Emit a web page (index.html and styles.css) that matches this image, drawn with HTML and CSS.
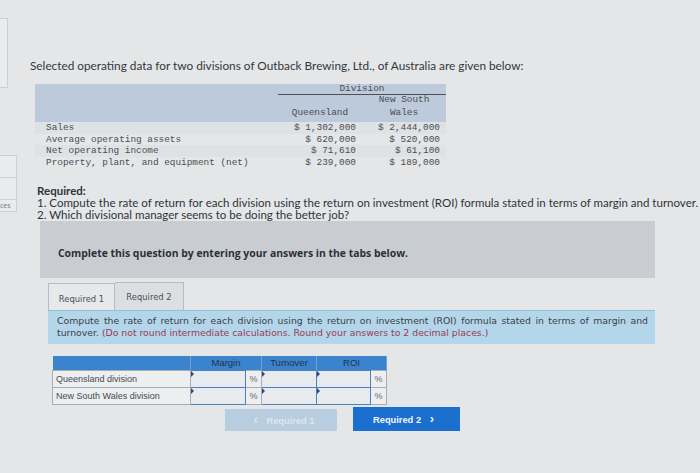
FILE: index.html
```html
<!DOCTYPE html>
<html>
<head>
<meta charset="utf-8">
<link rel="stylesheet" href="styles.css">
</head>
<body>
<div class="page">
  <aside class="sidebar">
    <div class="side-box side-box-a"></div>
    <div class="side-box side-box-b">
      <div class="side-cell"></div>
      <div class="side-cell"></div>
      <div class="side-cell side-label">ces</div>
    </div>
  </aside>
  <main class="main">
    <p class="intro">Selected operating data for two divisions of Outback Brewing, Ltd., of Australia are given below:</p>

    <table class="data">
      <tbody>
        <tr class="band">
          <td class="lbl"></td>
          <td class="div-head" colspan="2">Division</td>
        </tr>
        <tr class="band">
          <td class="lbl"></td>
          <td class="num"></td>
          <td class="num ctr">New South</td>
        </tr>
        <tr class="band band-last">
          <td class="lbl"></td>
          <td class="num ctr">Queensland</td>
          <td class="num ctr">Wales</td>
        </tr>
        <tr class="row">
          <td class="lbl">Sales</td>
          <td class="num">$ 1,302,000</td>
          <td class="num">$ 2,444,000</td>
        </tr>
        <tr class="row">
          <td class="lbl">Average operating assets</td>
          <td class="num">$ 620,000</td>
          <td class="num">$ 520,000</td>
        </tr>
        <tr class="row">
          <td class="lbl">Net operating income</td>
          <td class="num">$ 71,610</td>
          <td class="num">$ 61,100</td>
        </tr>
        <tr class="row">
          <td class="lbl">Property, plant, and equipment (net)</td>
          <td class="num">$ 239,000</td>
          <td class="num">$ 189,000</td>
        </tr>
      </tbody>
    </table>

    <div class="required">
      <div class="req-title">Required:</div>
      <div>1. Compute the rate of return for each division using the return on investment (ROI) formula stated in terms of margin and turnover.</div>
      <div>2. Which divisional manager seems to be doing the better job?</div>
    </div>

    <div class="notice">Complete this question by entering your answers in the tabs below.</div>

    <div class="tabs">
      <div class="tab tab-active">Required 1</div>
      <div class="tab tab-other">Required 2</div>
    </div>
    <div class="instructions">
      <div class="line line-just">Compute the rate of return for each division using the return on investment (ROI) formula stated in terms of margin and</div>
      <div class="line">turnover. <span class="hint">(Do not round intermediate calculations. Round your answers to 2 decimal places.)</span></div>
    </div>

    <table class="answer">
      <thead>
        <tr>
          <th class="a-lbl"></th>
          <th colspan="2">Margin</th>
          <th>Turnover</th>
          <th colspan="2">ROI</th>
        </tr>
      </thead>
      <tbody>
        <tr>
          <td class="a-lbl">Queensland division</td>
          <td class="inp"><span class="mark"></span></td>
          <td class="pct">%</td>
          <td class="inp"><span class="mark"></span></td>
          <td class="inp"><span class="mark"></span></td>
          <td class="pct">%</td>
        </tr>
        <tr>
          <td class="a-lbl">New South Wales division</td>
          <td class="inp"><span class="mark"></span></td>
          <td class="pct">%</td>
          <td class="inp"><span class="mark"></span></td>
          <td class="inp"><span class="mark"></span></td>
          <td class="pct">%</td>
        </tr>
      </tbody>
    </table>

    <div class="nav">
      <div class="btn btn-prev"><span class="chev">&lsaquo;</span> Required 1</div>
      <div class="btn btn-next">Required 2 <span class="chev">&rsaquo;</span></div>
    </div>
  </main>
</div>
</body>
</html>
```

FILE: styles.css
```css
* { box-sizing: border-box; }
html, body { margin: 0; padding: 0; }
body {
  background: #e4e6e8;
  width: 700px;
  height: 473px;
  overflow: hidden;
  font-family: "Lato", "Open Sans", sans-serif;
  color: #2d3236;
}
.page {
  display: flex;
  height: 473px;
}
.sidebar {
  width: 18px;
  flex: none;
  padding-top: 18px;
  display: flex;
  flex-direction: column;
}
.side-box {
  border: 1px solid #cdd0d3;
  border-left: none;
  background: #e9ebed;
}
.side-box-a {
  width: 8px;
  height: 70px;
}
.side-box-b {
  width: 17px;
  margin-top: 67px;
  display: flex;
  flex-direction: column;
}
.side-cell {
  height: 22px;
  border-bottom: 1px solid #cdd0d3;
}
.side-cell:last-child { border-bottom: none; height: 11px; }
.side-label {
  font-family: "Open Sans", sans-serif;
  font-size: 7px;
  line-height: 11px;
  color: #6d7a86;
}
.main {
  flex: 1;
  padding-left: 12px;
}
.intro {
  margin: 58px 0 0 0;
  font-size: 11.8px;
  line-height: 16px;
  color: #33383c;
  white-space: nowrap;
}
.data {
  margin: 10px 0 0 5px;
  border-collapse: collapse;
  font-family: "Liberation Mono", monospace;
  font-size: 9.4px;
  color: #4a4e52;
}
.data td {
  padding: 0;
  height: 10px;
  line-height: 10px;
  white-space: nowrap;
}
.data .lbl { width: 243px; padding-left: 11px; }
.data .num { width: 84px; text-align: right; padding-right: 6px; }
.data .ctr { text-align: center; padding-right: 0; }
.band td { background: #bccadb; }
.band-last td { height: 17px; vertical-align: middle; padding-bottom: 2px; }
.data .div-head {
  text-align: center;
  border-bottom: 1px solid #4d5258;
  height: 10px;
  vertical-align: bottom;
}
.row td { height: 11.5px; padding-top: 1px; }
.row:nth-child(even) td { background: #dfe2e5; }
.required {
  margin: 17px 0 0 7px;
  font-size: 11.5px;
  line-height: 12px;
  color: #2f3438;
  white-space: nowrap;
}
.req-title { font-weight: 700; }
.notice {
  margin: 0 0 0 10px;
  width: 615px;
  height: 57px;
  background: #c9cdd1;
  padding: 25px 0 0 18px;
  font-family: "Open Sans", sans-serif;
  font-weight: 700;
  font-size: 10.4px;
  color: #2d3135;
  white-space: nowrap;
}
.tabs {
  display: flex;
  margin: 4px 0 0 18px;
}
.tab {
  height: 28px;
  padding-top: 10px;
  text-align: center;
  white-space: nowrap;
  font-family: "DejaVu Sans", sans-serif;
  font-size: 8.4px;
  color: #4b5055;
  border: 1px solid #b8bcc0;
  border-bottom: none;
  background: #dcdfe2;
}
.tab-active {
  background: #e6e8ea;
  width: 67px;
  margin-top: 1px;
  height: 27px;
  padding-top: 10px;
}
.tab-other { width: 69px; border-left: none; padding-top: 9px; }
.instructions {
  margin-left: 18px;
  width: 607px;
  height: 34px;
  background: #b3d6ea;
  border-top: 1px solid #8fbfd9;
  padding: 4px 7px 0 9px;
  font-family: "DejaVu Sans", sans-serif;
  font-size: 9.3px;
  line-height: 12px;
  color: #3a4046;
}
.line { white-space: nowrap; }
.line-just {
  white-space: normal;
  text-align: justify;
  text-align-last: justify;
}
.hint { color: #9a3a55; }
.answer {
  margin: 12px 0 0 22px;
  border-collapse: collapse;
  font-family: "Liberation Sans", sans-serif;
  font-size: 9px;
}
.answer th {
  background: #3b83cc;
  color: #1e3550;
  font-weight: 400;
  font-size: 9.5px;
  height: 14px;
  padding: 0;
  border-right: 1px solid #6fa0d6;
  text-align: center;
}
.answer th.a-lbl { width: 138px; }
.answer td {
  padding: 0;
  height: 17px;
  border: 1px solid #a9adb1;
  background: #eceef0;
}
.answer td.a-lbl {
  padding-left: 3px;
  color: #444a50;
}
.answer td.inp {
  width: 55px;
  border: 1.5px solid #4d7fbc;
  background: #e8ebee;
  position: relative;
}
.answer tr td.inp + td.inp { width: 54px; }
.answer td.pct {
  width: 16px;
  text-align: center;
  color: #666b70;
}
.mark {
  position: absolute;
  left: 0;
  top: 0;
  width: 0;
  height: 0;
  border-top: 3px solid transparent;
  border-bottom: 3px solid transparent;
  border-left: 3px solid #2a4a77;
}
.nav {
  display: flex;
  margin: 2px 0 0 195px;
  gap: 16px;
}
.btn {
  height: 24px;
  font-family: "Liberation Sans", sans-serif;
  font-weight: 700;
  font-size: 9.3px;
  line-height: 24px;
  text-align: center;
}
.btn-prev {
  width: 112px;
  margin-top: 2px;
  height: 22px;
  line-height: 22px;
  background: #b9cde0;
  color: #dde6ee;
}
.btn-next {
  width: 107px;
  background: #1b70cf;
  color: #f2f6fb;
}
.chev { font-size: 13px; padding: 0 6px; font-weight: 700; }
```
